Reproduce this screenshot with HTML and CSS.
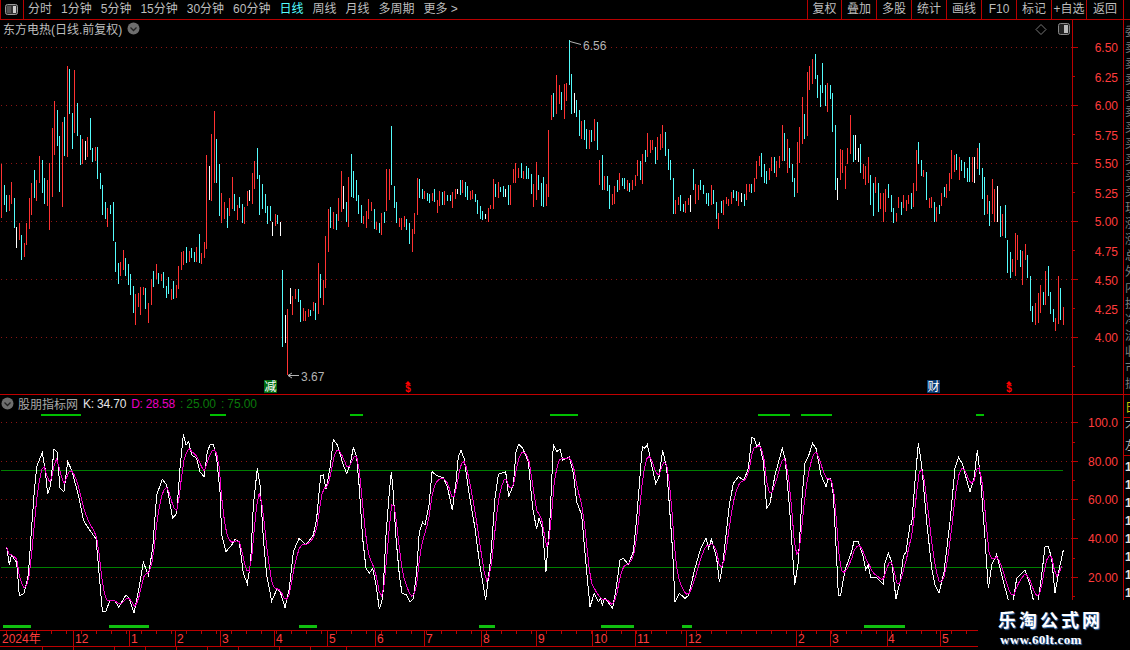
FILE: index.html
```html
<!DOCTYPE html>
<html lang="zh-CN">
<head>
  <meta charset="UTF-8">
  <meta name="viewport" content="width=device-width, initial-scale=1.0">
  <title>东方电热 日线</title>
  <link rel="stylesheet" href="styles.css">
</head>
<body>
  <div class="terminal">
    <div class="toolbar">
      <div class="layout-btn">
        <svg width="13" height="11" viewBox="0 0 13 11"><rect x="0.5" y="0.5" width="12" height="10" rx="2" fill="#333" stroke="#999"/><rect x="2" y="2" width="4" height="7" fill="#555"/><rect x="8" y="2" width="3" height="7" fill="#ccc"/></svg>
      </div>
      <div class="periods">
        <span>分时</span>
        <span>1分钟</span>
        <span>5分钟</span>
        <span>15分钟</span>
        <span>30分钟</span>
        <span>60分钟</span>
        <span class="active">日线</span>
        <span>周线</span>
        <span>月线</span>
        <span>多周期</span>
        <span>更多 &gt;</span>
      </div>
      <div class="tools">
        <span class="tool">复权</span>
        <span class="tool">叠加</span>
        <span class="tool">多股</span>
        <span class="tool">统计</span>
        <span class="tool">画线</span>
        <span class="tool">F10</span>
        <span class="tool">标记</span>
        <span class="tool">+自选</span>
        <span class="tool">返回</span>
      </div>
    </div>

    <div class="workspace">
      <div class="charts">
        <div class="pane pane-price">
          <svg class="chart" width="1123" height="374" viewBox="0 20 1123 374">
            <path class="grid" d="M1 47.5H1072M1 105.5H1072M1 163.5H1072M1 221.5H1072M1 279.5H1072M1 337.5H1072"/>
            <path id="barsUp" class="bar-up"/>
            <path id="barsDown" class="bar-down"/>
            <path id="barsFlat" class="bar-flat"/>
            <path class="axis" d="M1072.5 20V394M1072 47.5H1078M1072 105.5H1078M1072 163.5H1078M1072 221.5H1078M1072 279.5H1078M1072 337.5H1078M1072 76.5H1075M1072 134.5H1075M1072 192.5H1075M1072 250.5H1075M1072 308.5H1075M1072 366.5H1075"/>
            <text class="axis-label" x="1118" y="52">6.50</text>
            <text class="axis-label" x="1118" y="82">6.25</text>
            <text class="axis-label" x="1118" y="110">6.00</text>
            <text class="axis-label" x="1118" y="140">5.75</text>
            <text class="axis-label" x="1118" y="168">5.50</text>
            <text class="axis-label" x="1118" y="198">5.25</text>
            <text class="axis-label" x="1118" y="226">5.00</text>
            <text class="axis-label" x="1118" y="256">4.75</text>
            <text class="axis-label" x="1118" y="285">4.50</text>
            <text class="axis-label" x="1118" y="314">4.25</text>
            <text class="axis-label" x="1118" y="342">4.00</text>
            <path class="note-line" d="M570 41.5L581 44.5M288 375.5H299M288 375.5L292 373M288 375.5L292 378"/>
            <text class="note" x="583" y="50">6.56</text>
            <text class="note" x="301" y="381">3.67</text>
            <rect class="tag-green" x="264" y="380" width="13" height="13"/>
            <text class="tag-text" x="270.5" y="391">减</text>
            <rect class="tag-blue" x="927" y="380" width="13" height="13"/>
            <text class="tag-text" x="933.5" y="391">财</text>
            <path class="tag-arrow" d="M408 381L405 384H411ZM1009 381L1006 384H1012Z"/>
            <text class="tag-dollar" x="408" y="391.5">$</text>
            <text class="tag-dollar" x="1009" y="391.5">$</text>
          </svg>
          <div class="pane-title">
            <span>东方电热(日线.前复权)</span>
            <svg class="round-icon" width="13" height="13" viewBox="0 0 13 13"><circle cx="6.5" cy="6.5" r="6" fill="#6e6e6e"/><path d="M3.5 5.5L6.5 8.5L9.5 5.5" fill="none" stroke="#222" stroke-width="1.3"/></svg>
          </div>
          <div class="pane-tools">
            <svg width="36" height="13" viewBox="0 0 36 13"><path d="M6 1.5L11 6.5L6 11.5L1 6.5Z" fill="none" stroke="#777"/><rect x="23.5" y="0.5" width="11" height="11" rx="2" fill="#222" stroke="#888"/><rect x="29" y="2" width="4" height="8" fill="#bbb"/></svg>
          </div>
        </div>

        <div class="pane pane-osc">
          <svg class="chart" width="1123" height="235" viewBox="0 395 1123 235">
            <path class="grid" d="M1 422.5H1072M1 461.5H1072M1 499.5H1072M1 538.5H1072M1 577.5H1072"/>
            <path class="level" d="M1 470.5H1063M1 567.5H1063"/>
            <path class="signal-thin" d="M41 414.5H81M210 414.5H226M350 414.5H363M550 414.5H578M758 414.5H790M801 414.5H832M976 414.5H984"/>
            <path class="signal-thick" d="M3 626H31M109 626H149M299 626H317M479 626H495M601 626H634M682 626H692M864 626H905"/>
            <polyline id="lineK" class="line-k"/>
            <polyline id="lineD" class="line-d"/>
            <path class="axis" d="M1072.5 395V630M1072 422.5H1078M1072 461.5H1078M1072 499.5H1078M1072 538.5H1078M1072 577.5H1078M1072 442.5H1075M1072 480.5H1075M1072 519.5H1075M1072 558.5H1075M1072 596.5H1075"/>
            <text class="axis-label" x="1118" y="427">100.0</text>
            <text class="axis-label" x="1118" y="466">80.00</text>
            <text class="axis-label" x="1118" y="504">60.00</text>
            <text class="axis-label" x="1118" y="543">40.00</text>
            <text class="axis-label" x="1118" y="582">20.00</text>
          </svg>
          <div class="pane-title legend">
            <svg class="round-icon-left" width="13" height="13" viewBox="0 0 13 13"><circle cx="6.5" cy="6.5" r="6" fill="#6e6e6e"/><path d="M3.5 5.5L6.5 8.5L9.5 5.5" fill="none" stroke="#222" stroke-width="1.3"/></svg>
            <span class="legend-name">股朋指标网</span>
            <span class="legend-k">K: 34.70</span>
            <span class="legend-d">D: 28.58</span>
            <span class="legend-level">: 25.00</span>
            <span class="legend-level">: 75.00</span>
          </div>
        </div>

        <div class="time-axis">
          <svg class="chart" width="1123" height="17" viewBox="0 630 1123 17">
            <path class="axis" d="M0 630.5H978M0 646.5H978M73.5 630V646M129.5 630V646M175.5 630V646M220.5 630V646M274.5 630V646M327.5 630V646M375.5 630V646M424.5 630V646M481.5 630V646M536.5 630V646M592.5 630V646M635.5 630V646M686.5 630V646M796.5 630V646M830.5 630V646M887.5 630V646M940.5 630V646"/>
            <line class="time-ticks" x1="6" y1="632" x2="978" y2="632"/>
            <text class="time-label" x="2" y="643">2024年</text>
            <text class="time-label" x="75" y="643">12</text>
            <text class="time-label" x="131" y="643">1</text>
            <text class="time-label" x="177" y="643">2</text>
            <text class="time-label" x="222" y="643">3</text>
            <text class="time-label" x="276" y="643">4</text>
            <text class="time-label" x="329" y="643">5</text>
            <text class="time-label" x="377" y="643">6</text>
            <text class="time-label" x="426" y="643">7</text>
            <text class="time-label" x="483" y="643">8</text>
            <text class="time-label" x="538" y="643">9</text>
            <text class="time-label" x="594" y="643">10</text>
            <text class="time-label" x="637" y="643">11</text>
            <text class="time-label" x="688" y="643">12</text>
            <text class="time-label" x="798" y="643">2</text>
            <text class="time-label" x="832" y="643">3</text>
            <text class="time-label" x="888" y="643">4</text>
            <text class="time-label" x="942" y="643">5</text>
          </svg>
        </div>

        <div class="tab-strip">
          <span class="tab tab-wide">指标</span>
          <span class="tab">模板</span>
          <span class="tab tab-mid">均线</span>
          <span class="tab">成交量</span>
          <span class="tab">MACD</span>
          <span class="tab">KDJ</span>
          <span class="tab">RSI</span>
          <span class="tab tab-mid">BOLL</span>
          <span class="tab">WR</span>
          <span class="tab tab-wide">DMI</span>
        </div>
      </div>

      <div class="side">
        <div class="side-block side-quotes">
          <p>委比</p><p>卖五</p><p>卖四</p><p>卖三</p><p>卖二</p><p>卖一</p><p>买一</p><p>买二</p><p>买三</p><p>买四</p><p>买五</p><p>现价</p><p>涨跌</p><p>涨幅</p><p>总量</p><p>外盘</p><p>内盘</p><p>换手</p><p>净资</p><p>流通</p><p>收益</p><p>市盈</p><p>振幅</p>
        </div>
        <div class="side-block side-tab"><p>日</p></div>
        <div class="side-block side-info"><p>不</p><p>左</p></div>
        <div class="side-block side-list"><p>1</p><p>1</p><p>1</p><p>1</p><p>1</p><p>1</p><p>1</p><p>1</p></div>
      </div>
    </div>

    <div class="watermark">
      <div class="watermark-name">乐淘公式网</div>
      <div class="watermark-url">www.60lt.com</div>
    </div>
  </div>

  <script src="chart.js"></script>
</body>
</html>
```

FILE: styles.css
```css
* {
  box-sizing: border-box;
}

body {
  margin: 0;
  background-color: #000;
  font-family: "Liberation Sans", "Noto Sans CJK SC", sans-serif;
  font-size: 12px;
  color: #bdbdbd;
}

.terminal {
  position: relative;
  width: 1130px;
  height: 650px;
  overflow: hidden;
  background-color: #000;
}

/* top bar */
.toolbar {
  display: flex;
  height: 20px;
  padding-right: 6px;
  border-bottom: 1px solid #b80000;
  line-height: 19px;
}

.layout-btn {
  display: flex;
  align-items: center;
  justify-content: center;
  width: 24px;
  padding-right: 1px;
  border-left: 1px solid #b80000;
  border-right: 1px solid #b80000;
}

.periods {
  display: flex;
  gap: 9px;
  padding-left: 4px;
}

.periods .active {
  color: #54ffff;
}

.tools {
  display: flex;
  margin-left: auto;
}

.tool {
  width: 35px;
  border-left: 1px solid #b80000;
  text-align: center;
}

.tool:first-child {
  width: 34px;
}

.tool:last-child {
  width: 38px;
  border-right: 1px solid #b80000;
}

/* chart area */
.workspace {
  display: flex;
  height: 630px;
}

.charts {
  width: 1123px;
}

.pane {
  position: relative;
}

.pane-price {
  height: 375px;
  border-bottom: 1px solid #c00000;
}

.pane-osc {
  height: 235px;
}

.chart {
  display: block;
}

.pane-title {
  position: absolute;
  top: 0;
  left: 3px;
  display: flex;
  align-items: center;
  height: 17px;
}

.round-icon {
  margin-left: 5px;
}

.pane-tools {
  position: absolute;
  top: 3px;
  left: 1035px;
}

.legend {
  left: 1px;
  gap: 5px;
}

.round-icon-left {
  margin-right: -1px;
}

.legend-name {
  color: #a8a8a8;
}

.legend-k {
  color: #e6e6e6;
  letter-spacing: -0.2px;
}

.legend-d {
  color: #e800c0;
  letter-spacing: -0.2px;
}

.legend-level {
  color: #0a7a0a;
  letter-spacing: -0.1px;
}

/* svg parts */
.grid {
  fill: none;
  stroke: #8c1414;
  stroke-dasharray: 1 4;
}

.axis {
  fill: none;
  stroke: #bc0000;
  shape-rendering: crispEdges;
}

.axis-label {
  fill: #ff3c3c;
  font-size: 12px;
  text-anchor: end;
}

.bar-up,
.bar-down,
.bar-flat {
  fill: none;
  shape-rendering: crispEdges;
}

.bar-up {
  stroke: #ff3232;
}

.bar-down {
  stroke: #54fcfc;
}

.bar-flat {
  stroke: #fff;
}

.note {
  fill: #b4b4b4;
  font-size: 12px;
}

.note-line {
  fill: none;
  stroke: #b4b4b4;
}

.tag-green {
  fill: #006c10;
}

.tag-blue {
  fill: #0a3c74;
}

.tag-text {
  fill: #fff;
  font-size: 12px;
  text-anchor: middle;
}

.tag-arrow {
  fill: #ff0000;
}

.tag-dollar {
  fill: #ff0000;
  font-size: 10px;
  font-weight: bold;
  text-anchor: middle;
}

.level {
  fill: none;
  stroke: #008000;
  shape-rendering: crispEdges;
}

.signal-thin {
  fill: none;
  stroke: #00c000;
  stroke-width: 2;
  shape-rendering: crispEdges;
}

.signal-thick {
  fill: none;
  stroke: #10c010;
  stroke-width: 3;
  shape-rendering: crispEdges;
}

.line-k,
.line-d {
  fill: none;
  shape-rendering: crispEdges;
}

.line-k {
  stroke: #fff;
}

.line-d {
  stroke: #f000c8;
}

.time-ticks {
  stroke: #bc0000;
  stroke-width: 3;
  stroke-dasharray: 1 14;
  shape-rendering: crispEdges;
}

.time-label {
  fill: #ff3c3c;
  font-size: 12px;
}

/* strip under the time axis, cut off by the window */
.tab-strip {
  display: flex;
  height: 3px;
  padding-left: 7px;
  overflow: hidden;
  line-height: 20px;
  color: #ddd;
}

.tab {
  width: 31px;
  overflow: hidden;
  border-right: 1px solid #bc0000;
  white-space: nowrap;
}

.tab-wide {
  width: 36px;
}

.tab-mid {
  width: 41px;
}

/* right panel, only its left edge is on screen */
.side {
  width: 7px;
  overflow: hidden;
  border-left: 1px solid #b80000;
  white-space: nowrap;
}

.side-block {
  padding-left: 1px;
  border-bottom: 1px solid #b80000;
}

.side-block p {
  width: 30px;
  margin: 0;
}

.side-quotes {
  height: 375px;
  padding-top: 4px;
  line-height: 16px;
  color: #7c7c7c;
}

.side-tab {
  height: 23px;
  padding-top: 4px;
  line-height: 18px;
  color: #c8c800;
}

.side-info {
  height: 38px;
  line-height: 19px;
  color: #b4b4b4;
}

.side-list {
  height: 194px;
  padding-top: 2px;
  border-bottom: 0;
  line-height: 18px;
  font-weight: bold;
  color: #e0e0e0;
}

/* logo in the corner, covers what is under it */
.watermark {
  position: absolute;
  top: 600px;
  right: 0;
  bottom: 0;
  left: 978px;
  padding-left: 20px;
  background-color: #000;
}

.watermark-name {
  margin-top: 7px;
  font-family: "Noto Sans CJK SC", sans-serif;
  font-size: 18px;
  font-weight: bold;
  line-height: 24px;
  letter-spacing: 3px;
  color: #fff;
  text-shadow: 1px 1px 1px #3f78b8;
}

.watermark-url {
  margin: 1px 0 0 2px;
  font-family: "Liberation Serif", serif;
  font-size: 13px;
  font-weight: bold;
  line-height: 15px;
  letter-spacing: 0.3px;
  color: #fff;
  text-shadow: 1px 1px 1px #3f78b8;
}
```

FILE: chart.js
```js
// Bars and K line were read off 3x crops, so each block keeps its crop origin.
// Bar format: colour + x,top,bottom (r up, c down, w flat)
const barBlocks = [
  { x0: 0, y0: 50, bars: 'r4,341,503 c13,405,465 c19,435,486 r28,435,483 r34,396,462 c43,444,534 w49,531,594 r58,519,570 c64,555,630 r73,579,621 r79,519,585 r88,444,537 r94,399,495 c103,360,444 r109,390,453 r118,318,399 c127,330,429 c133,384,462 r142,390,468 r148,339,540 r157,234,441 r163,153,315 c172,180,288 c178,258,426 r187,216,471 c193,201,318 r202,48,321 c208,57,192 c217,189,297 r223,60,249 c232,159,258 c241,255,345 r247,267,342 w256,273,330 r262,261,321 c271,204,300 c277,294,336 r286,291,333 c292,291,387 c301,369,417 c307,405,495 c316,456,507 r322,474,531 c331,465,492 c340,456,573 c347,576,666 c355,639,702 r361,636,678 r370,600,660 c376,624,678 c385,642,705 c391,672,735 c400,708,789 r406,732,825 r415,729,771 r421,711,795 r430,711,735 c436,714,777 r445,759,819 r454,687,765 c460,663,711 r469,642,687 c475,669,702 r484,672,693 c490,666,714 c499,708,744 c505,681,732 r514,717,750 c520,693,747 r529,705,744 r535,648,717 r544,606,660 r550,603,645 c559,591,639 r568,603,636 c574,594,624 c583,606,636 r589,591,636 c598,552,639 r604,609,642 r613,576,624 r619,315,597 w628,348,450 r634,252,453 r643,183,399 c649,267,399 c658,342,498 r664,429,519 r673,456,507 c682,474,534 r688,444,498 r697,381,477 c703,432,483 r712,465,510 c718,441,474 c727,462,519 r733,471,522 r742,423,468 w748,420,453 r757,369,462 r763,333,417 c772,294,387 c778,375,495 c787,402,477 c796,432,489 c802,468,522 c811,468,513 w817,516,558 r826,492,528 c832,495,522 w841,516,558 c847,660,891 w856,795,879 r862,777,975 w871,714,762 r877,738,795 r886,717,747 c895,717,756' },
  { x0: 270, y0: 40, bars: 'c91,780,846 r100,804,843 r106,813,843 r115,807,831 c121,810,828 r130,786,813 c136,789,840 r145,669,822 c151,702,774 r160,720,795 r166,588,744 r175,507,636 c181,501,564 r190,516,567 c199,522,570 r205,474,543 r214,393,516 w220,438,507 c229,486,546 r235,411,561 c244,342,471 c250,393,474 c259,420,483 c265,465,522 c274,495,549 r280,528,552 r289,513,564 r295,477,537 r304,486,513 c313,507,567 r319,546,570 c328,549,579 r334,519,585 c343,516,549 r349,387,513 r358,387,480 c364,258,435 c373,438,504 c379,486,549 r388,534,561 r394,534,570 r403,528,561 c409,537,570 c418,549,612 r427,567,636 r433,519,582 r442,414,525 c448,417,474 c457,447,477 r463,453,477 c472,459,483 c478,462,489 r487,459,483 c493,447,486 r502,480,519 r508,453,498 c517,456,495 r523,453,495 c532,465,483 c541,465,483 r547,456,504 r556,447,477 w562,447,462 c571,420,465 r577,420,459 c586,426,471 c592,438,480 r601,453,480 r607,450,477 c616,462,486 c622,480,522 c631,498,537 c637,513,540 w646,522,537 r655,504,546 r661,495,507 r670,417,507 c676,432,471 r685,426,474 c691,441,456 c700,438,471 w706,447,471 c715,435,495 r721,435,495 r730,387,429 r736,369,429 r745,384,414 c754,369,414 r760,393,417 c769,378,417 c775,384,417 c784,402,462 r790,432,501 r799,366,480 c805,405,450 c814,429,498 c820,411,501 r829,432,498 r835,270,471 r844,165,240 c850,159,231 r859,105,222 r868,135,192 c874,156,210 r883,132,237 r889,129,183 c898,0,135 c904,102,222 w913,159,219 c919,180,231 c928,210,288 r934,243,297 c943,240,300 c949,267,327 r958,270,327 c964,270,306 r973,237,303 c982,246,330 r988,360,435 c997,345,450 r1003,408,450 c1012,408,453 c1018,435,507 r1027,462,495 r1033,438,492 c1042,420,456 r1048,399,450 c1057,414,438 c1063,414,447 r1072,420,453 c1078,429,456 r1087,420,450 r1096,405,438 r1102,360,408 c1111,363,420 r1117,342,432 c1126,330,366 r1132,279,351' },
  { x0: 650, y0: 40, bars: 'r1,300,339 r7,300,330 c16,321,372 r22,291,360 r31,282,330 r37,255,324 c46,276,348 c55,327,390 c61,360,420 c70,414,522 r76,480,522 r85,471,495 c91,465,513 c100,492,516 r106,483,519 r115,474,495 w121,465,516 c130,387,450 r136,432,492 r145,435,480 c151,420,450 c160,435,462 c169,459,492 c175,459,498 r184,435,495 c190,450,492 c199,486,537 r205,519,567 c214,483,519 r220,480,525 r229,471,492 r235,477,498 r244,456,492 c250,450,474 c259,453,483 r265,456,498 w274,459,486 c283,462,498 r289,432,480 r298,432,456 c304,432,459 r313,414,456 r319,363,417 r328,348,378 c334,339,411 c343,372,429 c349,393,432 r358,384,420 r364,351,393 c373,351,399 r379,363,411 r388,348,384 r397,255,363 c403,279,363 r412,297,399 c418,324,384 c427,372,426 c433,414,471 r442,306,459 r448,261,369 r457,171,312 c463,222,297 r472,96,288 r478,78,150 r487,57,132 c496,42,117 c502,105,174 c511,135,201 c517,69,159 c526,135,198 r532,129,216 c541,135,177 c547,159,276 c556,255,450 w562,414,480 r571,327,420 r577,330,399 r586,378,447 r592,324,372 r601,225,342 c610,285,366 w616,285,360 w625,324,366 c631,312,399 r640,372,417 r646,378,435 r655,351,429 c661,405,495 c670,429,528 r676,411,459 c685,429,516 r691,459,507 r700,459,546 r706,447,516 c715,432,474 c724,465,516 c730,504,549 r739,519,546 r745,471,504 c754,486,525 r760,465,504 r769,480,513 r775,465,492 c784,459,507 r790,429,501 r799,330,453 c805,306,372 c814,360,408 r820,390,411 c829,396,480 r838,474,504 r844,471,504 c853,486,546 r859,501,546 c868,495,522 r874,459,498 c883,441,471 r889,432,474 r898,399,453 r904,330,417 r913,345,396 c919,342,390 r928,351,420 c934,360,393 c943,366,414 c952,384,426 c958,351,426 r967,351,426 w973,351,429 r982,324,387 c988,309,405 c997,384,477 c1003,411,525 r1012,465,522 c1018,483,558 r1027,417,522 r1033,447,546 w1042,438,546 c1051,498,591 r1057,522,588 c1066,495,594 c1072,600,699 c1081,636,714 r1087,657,696 r1096,579,708 r1102,585,660 c1111,630,681 r1117,633,735 r1126,612,660 c1132,645,714 c1141,708,813 c1147,798,846 r1156,789,855 r1165,759,849 r1171,735,819 c1180,756,795 r1186,693,795 c1195,678,768 c1201,756,822 c1210,807,846 r1216,834,873 r1225,708,852 c1231,744,840 r1240,801,855' }
];

const kBlocks = [
  { x0: 0, y0: 425, points: '20,365 28,420 34,390 50,412 58,512 72,505 85,450 94,320 102,210 110,125 127,83 135,130 143,208 152,180 162,72 171,80 180,190 192,200 203,110 215,135 235,210 250,285 262,305 288,342 295,420 307,558 318,558 330,525 345,528 356,546 378,510 388,520 402,565 415,500 430,412 445,450 458,370 470,210 487,163 500,180 518,280 530,265 540,130 550,28 558,60 566,50 575,90 590,100 600,140 612,155 622,80 630,60 640,58 650,100 660,200 665,330 678,380 695,360 705,342 718,352 730,445 742,476 752,410 760,240 772,130 780,180 790,340 800,450 815,528 832,490 842,505 855,548 868,490 880,380 897,340 918,360 940,330 950,280 962,152 970,150 978,192 990,130 1000,43 1012,60 1030,120 1040,145 1050,120 1060,68 1070,95 1078,190' },
  { x0: 360, y0: 425, points: '0,222 8,340 18,430 28,445 38,430 48,480 58,552 68,520 78,330 88,200 94,140 100,205 108,340 118,450 126,505 140,510 150,532 160,520 170,440 178,320 188,292 195,300 207,240 216,140 230,152 250,158 262,185 277,255 288,170 295,95 303,76 312,100 328,210 345,310 358,410 377,525 392,400 405,220 415,148 437,140 446,215 460,180 468,80 476,58 487,68 505,110 518,250 530,312 537,280 547,310 558,440 570,280 580,58 590,80 600,72 608,105 628,95 640,145 650,230 665,270 680,440 690,545 703,505 715,530 722,520 727,540 735,518 750,540 758,550 770,480 780,405 790,400 805,418 820,380 830,280 847,65 855,70 862,58 875,120 887,175 897,155 908,75 920,130 928,240 938,380 945,532 958,505 975,520 985,512 1005,430 1022,370 1038,340 1046,370 1054,342 1070,400 1078,470' },
  { x0: 720, y0: 425, points: '0,462 8,420 18,330 28,240 40,175 55,155 72,165 85,130 95,38 103,40 110,65 118,55 130,110 140,250 150,235 165,150 187,70 195,100 208,240 224,480 235,410 245,230 255,115 265,95 278,55 288,70 303,150 318,185 325,160 332,162 340,210 350,400 355,510 362,510 375,435 395,380 402,348 415,350 430,395 437,435 445,420 452,458 470,458 490,478 495,415 505,385 515,410 528,522 540,470 550,395 558,380 570,300 575,298 585,170 595,55 605,120 620,290 635,430 645,480 657,505 672,440 690,290 705,130 716,97 728,118 740,165 750,200 762,160 772,75 782,165 795,340 805,490 815,420 830,388 845,450 865,525 880,525 890,460 915,435 930,480 940,525 955,525 965,450 975,365 985,365 995,400 1005,505 1018,430 1030,375' }
];

function drawBars() {
  const paths = { r: '', c: '', w: '' };
  barBlocks.forEach(block => {
    block.bars.split(' ').forEach(bar => {
      const [x, top, bottom] = bar.slice(1).split(',').map(Number);
      const px = Math.floor(block.x0 + x / 3) + 0.5;
      paths[bar[0]] += `M${px} ${Math.round(block.y0 + top / 3)}V${Math.round(block.y0 + bottom / 3)}`;
    });
  });
  document.getElementById('barsUp').setAttribute('d', paths.r);
  document.getElementById('barsDown').setAttribute('d', paths.c);
  document.getElementById('barsFlat').setAttribute('d', paths.w);
}

function drawLines() {
  const kPoints = [];
  kBlocks.forEach(block => {
    block.points.split(' ').forEach(point => {
      const [x, y] = point.split(',').map(Number);
      kPoints.push([block.x0 + x / 3, block.y0 + y / 3]);
    });
  });
  document.getElementById('lineK').setAttribute('points', kPoints.map(p => p.join(',')).join(' '));

  // D is K smoothed bar by bar, one bar every 2.5px
  const dPoints = [];
  let seg = 0;
  let d = kPoints[0][1];
  for (let x = kPoints[0][0]; x <= kPoints[kPoints.length - 1][0]; x += 2.5) {
    while (kPoints[seg + 1][0] < x) seg++;
    const [x1, y1] = kPoints[seg];
    const [x2, y2] = kPoints[seg + 1];
    const k = y1 + (y2 - y1) * (x - x1) / (x2 - x1);
    d += (k - d) * 0.45;
    dPoints.push(`${x},${d}`);
  }
  document.getElementById('lineD').setAttribute('points', dPoints.join(' '));
}

drawBars();
drawLines();
```
